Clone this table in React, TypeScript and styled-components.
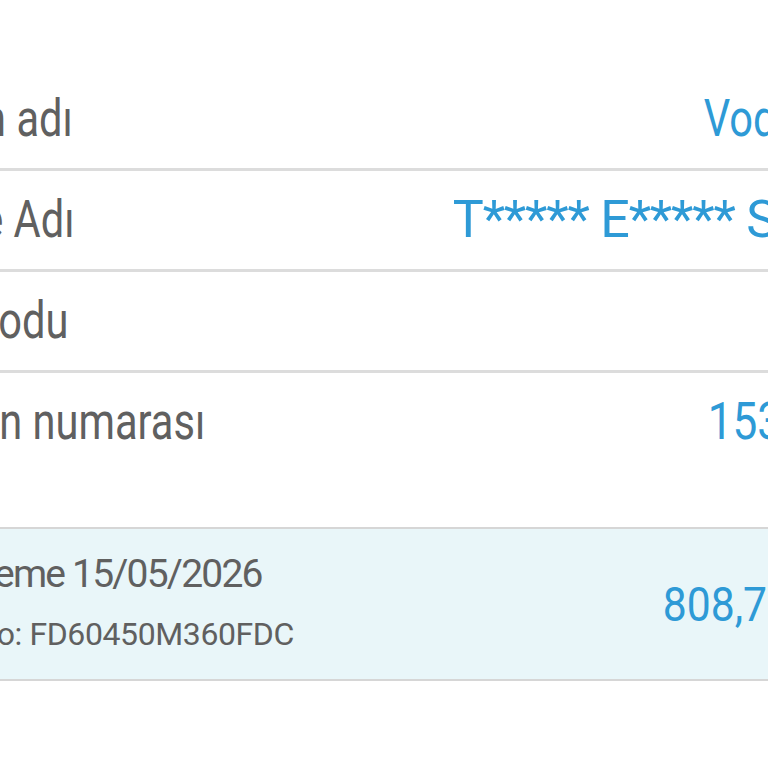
import React from "react";
import styled, { createGlobalStyle } from "styled-components";

const Global = createGlobalStyle`
  html, body {
    margin: 0;
    padding: 0;
    background: #ffffff;
    overflow: hidden;
  }
`;

const Page = styled.main`
  width: 998px;
  margin-left: -116px;
  padding-top: 70px;
  display: flex;
  flex-direction: column;
  font-family: "Roboto", sans-serif;
`;

const InfoList = styled.div`
  display: flex;
  flex-direction: column;
`;

const Row = styled.div<{ $divider?: boolean }>`
  height: 98px;
  display: flex;
  align-items: center;
  justify-content: space-between;
  border-bottom: ${(p) => (p.$divider ? "3px solid #dcdcdc" : "0")};
`;

const Label = styled.span`
  display: inline-block;
  font-size: 52px;
  line-height: 1;
  color: #606060;
  white-space: nowrap;
  transform: scaleX(0.8);
  transform-origin: left center;
`;

const Value = styled.span<{ $scale: number; $spacing: number }>`
  display: inline-block;
  font-size: 52px;
  line-height: 1;
  letter-spacing: ${(p) => p.$spacing}px;
  color: #2e9ad6;
  white-space: nowrap;
  transform: scaleX(${(p) => p.$scale});
  transform-origin: right center;
`;

const BillBox = styled.section`
  margin-top: 56px;
  height: 150px;
  padding-right: 33px;
  background: #e9f6f9;
  border-top: 2px solid #d6d6d6;
  border-bottom: 2px solid #d6d6d6;
  display: flex;
  align-items: center;
  justify-content: space-between;
`;

const BillInfo = styled.div`
  display: flex;
  flex-direction: column;
  gap: 20px;
`;

const BillLine = styled.span<{ $size: number; $spacing: number }>`
  font-size: ${(p) => p.$size}px;
  line-height: 40px;
  letter-spacing: ${(p) => p.$spacing}px;
  color: #606060;
  white-space: nowrap;
`;

const Amount = styled.span`
  display: inline-block;
  font-size: 49px;
  line-height: 1;
  color: #2e9ad6;
  white-space: nowrap;
  transform: scaleX(0.87);
  transform-origin: right center;
`;

const rows = [
  { label: "Kurum adı", value: "Vodafone", scale: 0.8, spacing: 0 },
  { label: "Abone Adı", value: "T***** E***** S*****", scale: 1, spacing: -1.2 },
  { label: "Alan kodu", value: "", scale: 1, spacing: 0 },
  { label: "Telefon numarası", value: "1534872", scale: 0.85, spacing: 0 },
];

export default function App() {
  return (
    <>
      <Global />
      <Page>
        <InfoList>
          {rows.map((r, i) => (
            <Row key={r.label} $divider={i < rows.length - 1}>
              <Label>{r.label}</Label>
              <Value $scale={r.scale} $spacing={r.spacing}>
                {r.value}
              </Value>
            </Row>
          ))}
        </InfoList>
        <BillBox>
          <BillInfo>
            <BillLine $size={39} $spacing={-1.8}>
              Son ödeme 15/05/2026
            </BillLine>
            <BillLine $size={32} $spacing={-0.4}>
              Fatura no: FD60450M360FDC
            </BillLine>
          </BillInfo>
          <Amount>808,75 TL</Amount>
        </BillBox>
      </Page>
    </>
  );
}
